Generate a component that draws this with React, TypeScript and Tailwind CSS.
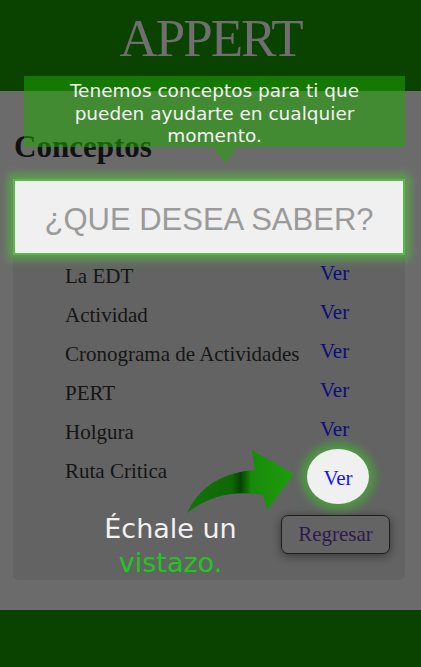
const conceptos = [
  "La EDT",
  "Actividad",
  "Cronograma de Actividades",
  "PERT",
  "Holgura",
  "Ruta Critica",
];

function GreenArrow() {
  return (
    <svg
      className="absolute left-[180px] top-[445px]"
      width="125"
      height="75"
      viewBox="0 0 125 75"
    >
      <defs>
        <linearGradient id="arrowFill" x1="0" y1="0" x2="1" y2="0">
          <stop offset="0" stopColor="#127307" />
          <stop offset="0.42" stopColor="#0f6806" />
          <stop offset="0.5" stopColor="#064200" />
          <stop offset="0.6" stopColor="#178a0a" />
          <stop offset="1" stopColor="#1e9e0c" />
        </linearGradient>
      </defs>
      <path
        d="M7 68 C20 40 45 27 75 25 L72 5 L114 29 L87 65 L83 50 C55 45 30 50 7 68 Z"
        fill="url(#arrowFill)"
      />
    </svg>
  );
}

export default function App() {
  return (
    <div className="relative w-[421px] h-[667px] overflow-hidden bg-[#6b6b6b] font-['Liberation_Serif',serif]">
      {/* Header */}
      <header className="h-[91px] bg-[#0a4200] flex justify-center">
        <h1 className="pt-[12px] text-[53px] leading-none tracking-[-2px] text-[#6f6f6f]">
          APPERT
        </h1>
      </header>

      <main className="flex flex-col">
        <h2 className="mt-[40px] ml-[14px] text-[31px] leading-none font-bold text-[#111]">
          Conceptos
        </h2>

        {/* Panel */}
        <div className="mt-[17px] mx-[13px] w-[392px] flex flex-col rounded-md bg-[#636363] pb-[26px]">
          <div className="h-[76px] flex items-center justify-center pt-1 bg-[#f0f0f0] border-2 border-[#5cb84a] shadow-[0_0_9px_5px_rgba(88,180,70,0.75)]">
            <span className="font-['Liberation_Sans',sans-serif] text-[31px] leading-none text-[#9a9a9a]">
              ¿QUE DESEA SABER?
            </span>
          </div>

          <ul className="mt-[2px] flex flex-col">
            {conceptos.map((c, i) => {
              const last = i === conceptos.length - 1;
              return (
                <li key={c} className="flex items-start text-[21px]">
                  <span className="w-[307px] pl-[52px] leading-[39px] text-[#151515]">
                    {c}
                  </span>
                  {last ? (
                    <span className="relative w-[31px] h-[33px]">
                      <span className="absolute -left-[13px] -top-[3px] w-[62px] h-[55px] rounded-[50%] bg-[#f0f0f0] flex items-center justify-center pt-[3px] text-[#1414f0] leading-none shadow-[0_0_10px_6px_rgba(70,175,55,0.75)]">
                        Ver
                      </span>
                    </span>
                  ) : (
                    <span className="leading-[33px] text-[#0d0d7a]">Ver</span>
                  )}
                </li>
              );
            })}
          </ul>

          <button className="mt-[24px] mr-[15px] self-end w-[109px] h-[39px] rounded-[7px] border-[1.5px] border-[#1e1e1e] bg-[#646464] text-[21px] leading-none text-[#2d1b4e] shadow-[0_2px_10px_rgba(0,0,0,0.45)]">
            Regresar
          </button>
        </div>

        <footer className="mt-[30px] h-[80px] bg-[#0a4200]" />
      </main>

      {/* Tutorial overlay bits */}
      <div className="absolute left-[24px] top-[76px] w-[381px] h-[71px] pt-[4px] bg-[rgba(32,168,0,0.53)] text-center font-['DejaVu_Sans',sans-serif] text-[18.5px] leading-[22.5px] text-[#f4f4f4]">
        Tenemos conceptos para ti que
        <br />
        pueden ayudarte en cualquier
        <br />
        momento.
        <div className="absolute top-full left-[189px] w-0 h-0 border-x-[12px] border-x-transparent border-t-[16px] border-t-[rgba(32,168,0,0.53)]" />
      </div>

      <GreenArrow />

      <div className="absolute left-[70px] top-[512px] w-[201px] text-center font-['DejaVu_Sans',sans-serif] text-[27px] leading-[34px]">
        <span className="text-[#f2f2f2]">Échale un</span>
        <br />
        <span className="text-[#1ec81e]">vistazo.</span>
      </div>
    </div>
  );
}
